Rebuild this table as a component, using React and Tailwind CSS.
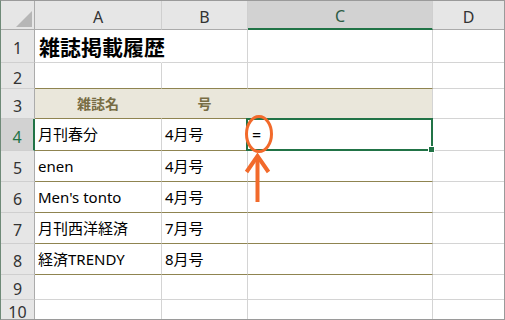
import React from "react";

const R = {
  g: "border-r border-r-[#d4d4d4]",
  t: "border-r border-r-transparent",
  n: "",
};
const B = {
  g: "border-b border-b-[#d4d4d4]",
  o: "border-b border-b-[#8f8450]",
  n: "",
};

function Cell({ r = "g", b = "g", className = "", children }) {
  return (
    <div className={`${R[r]} ${B[b]} flex items-center min-w-0 ${className}`}>
      {children}
    </div>
  );
}

function RowHead({ n, sel, last }) {
  const base = "flex items-center justify-center pt-[4px] text-[16px] leading-none";
  const cls = sel
    ? "bg-[#d2d2d2] border-r-2 border-r-[#217346] text-[#217346]"
    : "bg-[#e6e6e6] border-r border-r-[#ababab] text-[#333333]";
  const bb = last ? "" : "border-b border-b-[#cfcfcf]";
  return <div className={`${base} ${cls} ${bb}`}>{n}</div>;
}

function ColHead({ l, sel, last }) {
  const base = "flex items-center justify-center pt-[3px] text-[16px] leading-none";
  const cls = sel
    ? "bg-[#d2d2d2] border-b-2 border-b-[#217346] text-[#2d5c45]"
    : "bg-[#e6e6e6] border-b border-b-[#ababab] text-[#333333]";
  const br = last ? "" : "border-r border-r-[#cfcfcf]";
  return <div className={`${base} ${cls} ${br}`}>{l}</div>;
}

const body = [
  { n: 5, a: "enen", b: "4月号" },
  { n: 6, a: "Men's tonto", b: "4月号" },
  { n: 7, a: "月刊西洋経済", b: "7月号" },
  { n: 8, a: "経済TRENDY", b: "8月号" },
];

export default function App() {
  return (
    <div
      className="relative w-[505px] h-[320px] bg-white border border-[#9a9a9a] border-l-[#6f8a78] overflow-hidden text-[15px] text-black"
      style={{ fontFamily: '"Noto Sans", "Noto Sans CJK JP", sans-serif' }}
    >
      <div className="grid grid-cols-[34px_127px_86px_185px_71px] grid-rows-[29px_33px_26px_30px_32px_31px_31px_31px_31px_25px_19px]">
        {/* header row */}
        <div className="bg-[#e6e6e6] border-r border-r-[#ababab] border-b border-b-[#ababab] relative">
          <svg className="absolute left-0 top-0" width="34" height="29" viewBox="0 0 34 29">
            <polygon points="31,10 31,26 15,26" fill="#b6b6b6" />
          </svg>
        </div>
        <ColHead l="A" />
        <ColHead l="B" />
        <ColHead l="C" sel />
        <ColHead l="D" last />

        {/* row 1 */}
        <RowHead n={1} />
        <Cell r="t" className="pl-[4px] whitespace-nowrap overflow-visible">
          <span className="font-bold text-[21px] leading-none" style={{ fontFamily: '"Noto Sans CJK JP", sans-serif' }}>
            雑誌掲載履歴
          </span>
        </Cell>
        <Cell />
        <Cell />
        <Cell r="n" />

        {/* row 2 */}
        <RowHead n={2} />
        <Cell b="o" />
        <Cell b="o" />
        <Cell b="o" />
        <Cell r="n" />

        {/* row 3 */}
        <RowHead n={3} />
        <Cell r="t" b="o" className="bg-[#eae7db] justify-center">
          <span className="font-bold text-[14px] text-[#786d44]" style={{ fontFamily: '"Noto Sans CJK JP", sans-serif' }}>雑誌名</span>
        </Cell>
        <Cell r="t" b="o" className="bg-[#eae7db] justify-center">
          <span className="font-bold text-[14px] text-[#786d44]" style={{ fontFamily: '"Noto Sans CJK JP", sans-serif' }}>号</span>
        </Cell>
        <Cell b="o" className="bg-[#eae7db]" />
        <Cell r="n" />

        {/* row 4 */}
        <RowHead n={4} sel />
        <Cell b="o" className="pl-[3px] whitespace-nowrap">月刊春分</Cell>
        <Cell b="o" className="pl-[3px] whitespace-nowrap">4月号</Cell>
        <Cell b="o" className="pl-[4px] relative">
          <span className="text-[16px]">=</span>
          <div className="absolute -top-[1px] -left-[2px] -right-[1px] -bottom-[1px] border-2 border-[#217346] z-10" />
          <div className="absolute -right-[3px] -bottom-[3px] w-[7px] h-[7px] bg-[#217346] border border-white z-20" />
        </Cell>
        <Cell r="n" />

        {body.map((row) => (
          <React.Fragment key={row.n}>
            <RowHead n={row.n} />
            <Cell b="o" className="pl-[3px] whitespace-nowrap">{row.a}</Cell>
            <Cell b="o" className="pl-[3px] whitespace-nowrap">{row.b}</Cell>
            <Cell b="o" />
            <Cell r="n" />
          </React.Fragment>
        ))}

        {/* row 9 */}
        <RowHead n={9} />
        <Cell />
        <Cell />
        <Cell />
        <Cell r="n" />

        {/* row 10 */}
        <RowHead n={10} last />
        <Cell b="n" />
        <Cell b="n" />
        <Cell b="n" />
        <Cell r="n" b="n" />
      </div>

      <svg
        className="absolute -left-[1px] -top-[1px] pointer-events-none z-30"
        width="505"
        height="320"
        viewBox="0 0 505 320"
      >
        <ellipse cx="259" cy="134" rx="12.5" ry="17.5" fill="none" stroke="#f26a2b" strokeWidth="3" />
        <line x1="257.5" y1="157" x2="257.5" y2="202" stroke="#f26a2b" strokeWidth="4" />
        <polyline points="246.5,172 257.5,156 268.5,172" fill="none" stroke="#f26a2b" strokeWidth="4" />
      </svg>
    </div>
  );
}
